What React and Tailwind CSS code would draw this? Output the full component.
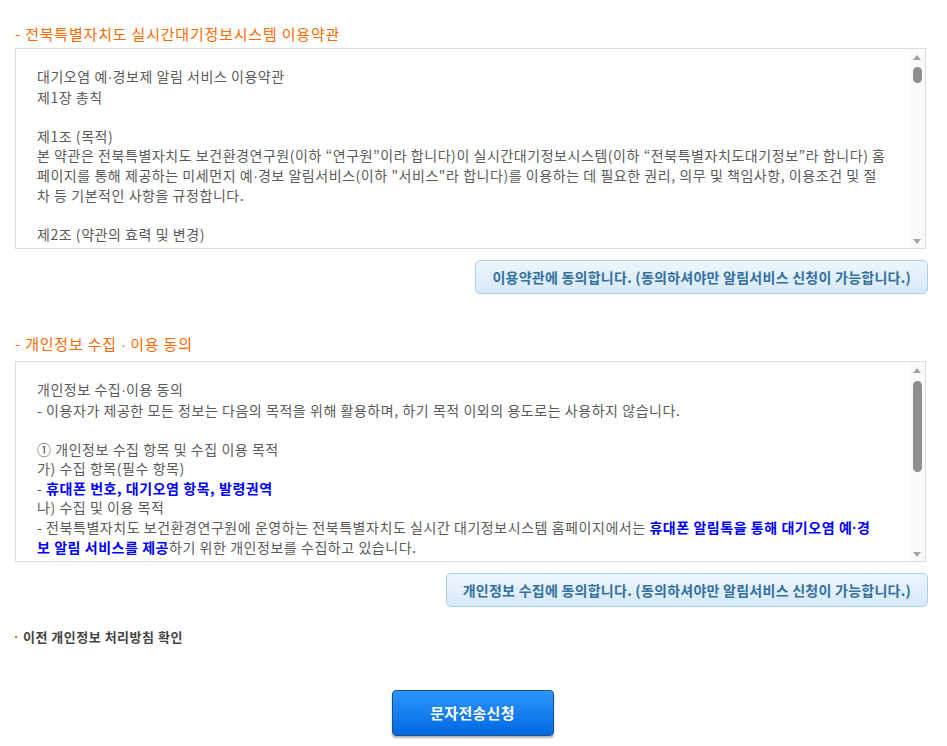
import React from 'react';

const FONT = "font-['Malgun_Gothic','Noto_Sans_CJK_KR','Noto_Sans',sans-serif]";

// narrow middle dot, as in the reference
const Dot = () => <span className="font-['Liberation_Sans',sans-serif] tracking-normal">·</span>;

const Scrollbar = ({ thumbTop, thumbHeight }) => (
  <div className="relative w-[15px] shrink-0 bg-[#fafafa]">
    <div className="absolute left-[3px] top-[6px] w-0 h-0 border-l-[4.5px] border-r-[4.5px] border-b-[5px] border-l-transparent border-r-transparent border-b-[#a3a3a3]" />
    <div
      className="absolute left-[2.5px] w-[9px] rounded-full bg-[#8f8f8f]"
      style={{ top: thumbTop, height: thumbHeight }}
    />
    <div className="absolute left-[3px] bottom-[4px] w-0 h-0 border-l-[4.5px] border-r-[4.5px] border-t-[5px] border-l-transparent border-r-transparent border-t-[#a3a3a3]" />
  </div>
);

const TermsBox = ({ children, thumbTop, thumbHeight }) => (
  <div className="flex h-[201px] border border-[#dcdcdc] bg-white">
    <div className="flex-1 overflow-hidden pt-[18px] pl-[21px] pr-2 text-[14px] leading-[19.5px] tracking-[0.55px] text-[#5a5a5a] whitespace-nowrap">
      {children}
    </div>
    <Scrollbar thumbTop={thumbTop} thumbHeight={thumbHeight} />
  </div>
);

const AgreeButton = ({ children }) => (
  <div className="flex justify-end -mr-[2px]">
    <button className="h-[34px] px-[16px] rounded-[5px] border border-[#a9cfee] bg-gradient-to-b from-[#eef6fd] to-[#d6e9f8] text-[14px] font-bold tracking-[0.25px] text-[#33709f]">
      {children}
    </button>
  </div>
);

const B = ({ children }) => <b className="text-[#0000ff]">{children}</b>;

export default function App() {
  return (
    <div className={`w-[947px] h-[746px] bg-white pl-[15px] pr-[21px] pt-[24px] ${FONT}`}>
      <h3 className="text-[15px] leading-[20px] tracking-[0.8px] text-[#ff6a00] font-normal">- 전북특별자치도 실시간대기정보시스템 이용약관</h3>
      <div className="mt-[4px]">
        <TermsBox thumbTop={18} thumbHeight={16}>
          <div>대기오염 예<Dot />경보제 알림 서비스 이용약관</div>
          <div>제1장 총칙</div>
          <div>&nbsp;</div>
          <div>제1조 (목적)</div>
          <div>본 약관은 전북특별자치도 보건환경연구원(이하 “연구원”이라 합니다)이 실시간대기정보시스템(이하 “전북특별자치도대기정보”라 합니다) 홈</div>
          <div>페이지를 통해 제공하는 미세먼지 예<Dot />경보 알림서비스(이하 "서비스"라 합니다)를 이용하는 데 필요한 권리, 의무 및 책임사항, 이용조건 및 절</div>
          <div>차 등 기본적인 사항을 규정합니다.</div>
          <div>&nbsp;</div>
          <div>제2조 (약관의 효력 및 변경)</div>
          <div>① 이 약관은 서비스를 이용하고자 하는 모든 이용자에 대하여 서비스 화면에 게시하거나 기타의 방법으로 공지함으로써 효력이 발생합니다.</div>
        </TermsBox>
      </div>
      <div className="mt-[11px]">
        <AgreeButton>이용약관에 동의합니다. (동의하셔야만 알림서비스 신청이 가능합니다.)</AgreeButton>
      </div>

      <h3 className="mt-[40px] text-[15px] leading-[20px] tracking-[0.8px] text-[#ff6a00] font-normal">- 개인정보 수집 <Dot /> 이용 동의</h3>
      <div className="mt-[6px]">
        <TermsBox thumbTop={19} thumbHeight={91}>
          <div>개인정보 수집<Dot />이용 동의</div>
          <div>- 이용자가 제공한 모든 정보는 다음의 목적을 위해 활용하며, 하기 목적 이외의 용도로는 사용하지 않습니다.</div>
          <div>&nbsp;</div>
          <div>① 개인정보 수집 항목 및 수집 이용 목적</div>
          <div>가) 수집 항목(필수 항목)</div>
          <div>- <B>휴대폰 번호, 대기오염 항목, 발령권역</B></div>
          <div>나) 수집 및 이용 목적</div>
          <div>- 전북특별자치도 보건환경연구원에 운영하는 전북특별자치도 실시간 대기정보시스템 홈페이지에서는 <B>휴대폰 알림톡을 통해 대기오염 예<Dot />경</B></div>
          <div><B>보 알림 서비스를 제공</B>하기 위한 개인정보를 수집하고 있습니다.</div>
          <div>&nbsp;</div>
        </TermsBox>
      </div>
      <div className="mt-[11px]">
        <AgreeButton>개인정보 수집에 동의합니다. (동의하셔야만 알림서비스 신청이 가능합니다.)</AgreeButton>
      </div>

      <div className="mt-[20px] flex items-center text-[13px] leading-[20px] font-bold tracking-[0.5px] text-[#444]">
        <span className="w-[2px] h-[2px] bg-[#ff6a00] mr-[6px]" />
        <span>이전 개인정보 처리방침 확인</span>
      </div>

      <div className="mt-[43px] flex justify-center">
        <button className="w-[162px] h-[46px] ml-[4px] rounded-[4px] border border-[#1d4f8c] bg-gradient-to-b from-[#2a96ff] to-[#0068e0] text-white text-[15px] font-bold tracking-[0.3px] shadow-[0_2px_2px_rgba(0,0,0,0.3)]">
          문자전송신청
        </button>
      </div>
    </div>
  );
}
